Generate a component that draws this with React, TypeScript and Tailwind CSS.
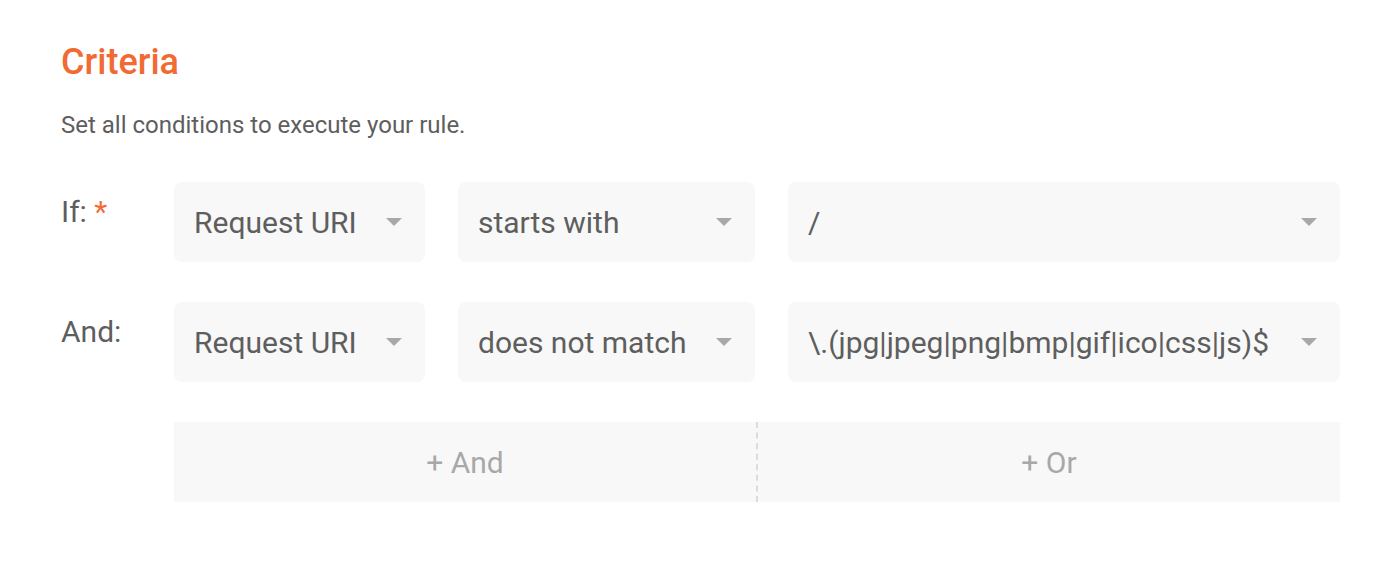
import React from "react";

function Arrow() {
  return (
    <svg width="16" height="8" viewBox="0 0 16 8" className="shrink-0">
      <path d="M0 0 L16 0 L8 8 Z" fill="#a8a8a8" />
    </svg>
  );
}

function Select({ value, w }: { value: string; w: string }) {
  return (
    <div
      className={`${w} h-[80px] rounded-[8px] bg-[#f8f8f8] flex items-center justify-between pl-[20px] pr-[23px]`}
    >
      <span className="text-[30px] text-[#5e5e5e] whitespace-nowrap">{value}</span>
      <Arrow />
    </div>
  );
}

export default function App() {
  return (
    <div
      className="w-[1399px] h-[564px] bg-white pl-[61px] pt-[40px]"
      style={{ fontFamily: "Roboto, 'Noto Sans', sans-serif" }}
    >
      <h1 className="text-[36px] leading-[44px] font-medium text-[#f26a33]">Criteria</h1>
      <p className="mt-[26px] text-[24px] leading-[30px] text-[#5e5e5e]">
        Set all conditions to execute your rule.
      </p>
      <div className="mt-[42px] flex flex-col gap-[40px]">
        <div className="flex">
          <div className="w-[113px] pt-[12px] text-[30px] leading-[36px] text-[#5e5e5e]">
            If: <span className="text-[#f26a33]">*</span>
          </div>
          <div className="flex gap-[33px]">
            <Select value="Request URI" w="w-[251px]" />
            <Select value="starts with" w="w-[297px]" />
            <Select value="/" w="w-[552px]" />
          </div>
        </div>
        <div className="flex">
          <div className="w-[113px] pt-[12px] text-[30px] leading-[36px] text-[#5e5e5e]">And:</div>
          <div className="flex gap-[33px]">
            <Select value="Request URI" w="w-[251px]" />
            <Select value="does not match" w="w-[297px]" />
            <Select value="\.(jpg|jpeg|png|bmp|gif|ico|css|js)$" w="w-[552px]" />
          </div>
        </div>
        <div className="flex">
          <div className="w-[113px]" />
          <div className="w-[1166px] h-[80px] bg-[#f8f8f8] flex">
            <div className="flex-1 flex items-center justify-center text-[30px] text-[#a8a8a8] border-r-2 border-dashed border-[#dcdcdc]">
              + And
            </div>
            <div className="flex-1 flex items-center justify-center text-[30px] text-[#a8a8a8]">
              + Or
            </div>
          </div>
        </div>
      </div>
    </div>
  );
}
